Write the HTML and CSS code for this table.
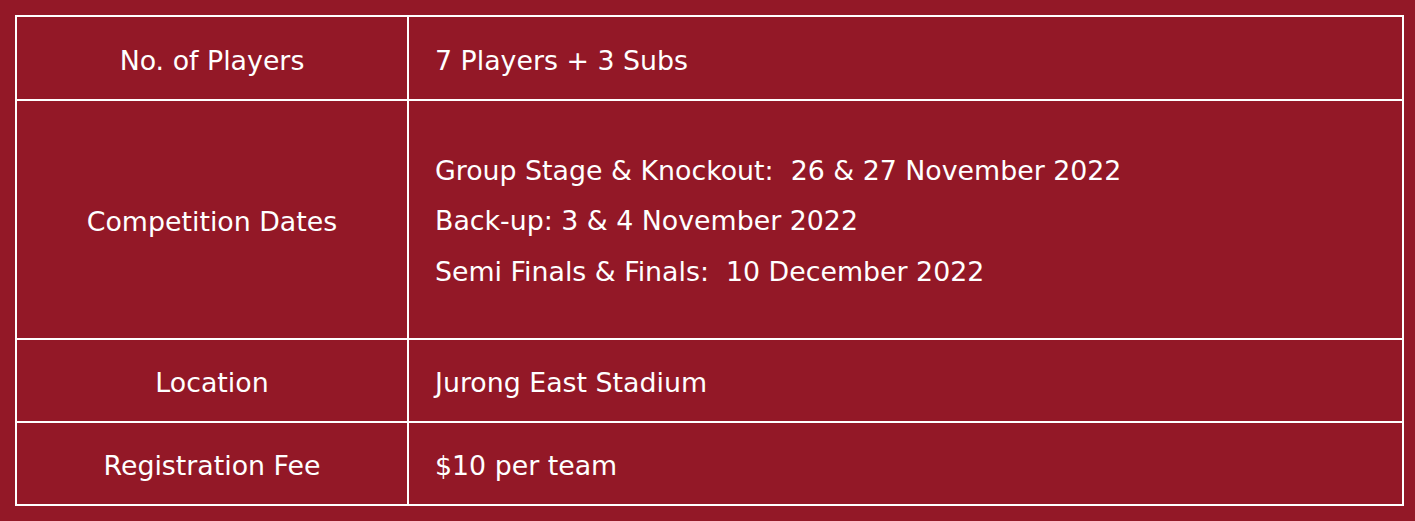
FILE: index.html
```html
<!DOCTYPE html>
<html lang="en">
<head>
<meta charset="utf-8">
<title>Competition Details</title>
<link rel="stylesheet" href="styles.css">
</head>
<body>
<div class="info-table">
  <div class="cell label row-1">No. of Players</div>
  <div class="cell value row-1">7 Players + 3 Subs</div>
  <div class="cell label row-2">Competition Dates</div>
  <div class="cell value row-2">
    <p>Group Stage &amp; Knockout:&nbsp; 26 &amp; 27 November 2022</p>
    <p>Back-up: 3 &amp; 4 November 2022</p>
    <p>Semi Finals &amp; Finals:&nbsp; 10 December 2022</p>
  </div>
  <div class="cell label row-3">Location</div>
  <div class="cell value row-3">Jurong East Stadium</div>
  <div class="cell label row-4">Registration Fee</div>
  <div class="cell value row-4">$10 per team</div>
</div>
</body>
</html>
```
FILE: styles.css
```css
html, body {
  margin: 0;
  padding: 0;
  background: #931827;
}
body {
  padding: 15px 11px 15px 15px;
  font-family: "DejaVu Sans", "Liberation Sans", sans-serif;
  font-size: 26.8px;
  color: #ffffff;
}
.info-table {
  display: grid;
  grid-template-columns: 392px 1fr;
  grid-template-rows: 84px 239px 83px 83px;
  width: 1389px;
  box-sizing: border-box;
  border-top: 2px solid #ffffff;
  border-left: 2px solid #ffffff;
}
.cell {
  border-right: 2px solid #ffffff;
  border-bottom: 2px solid #ffffff;
  display: flex;
  flex-direction: column;
  justify-content: center;
  padding-top: 4px;
}
.label {
  align-items: center;
  text-align: center;
}
.value {
  padding-left: 26px;
}
.value p {
  margin: 0;
  line-height: 50.5px;
}
```
